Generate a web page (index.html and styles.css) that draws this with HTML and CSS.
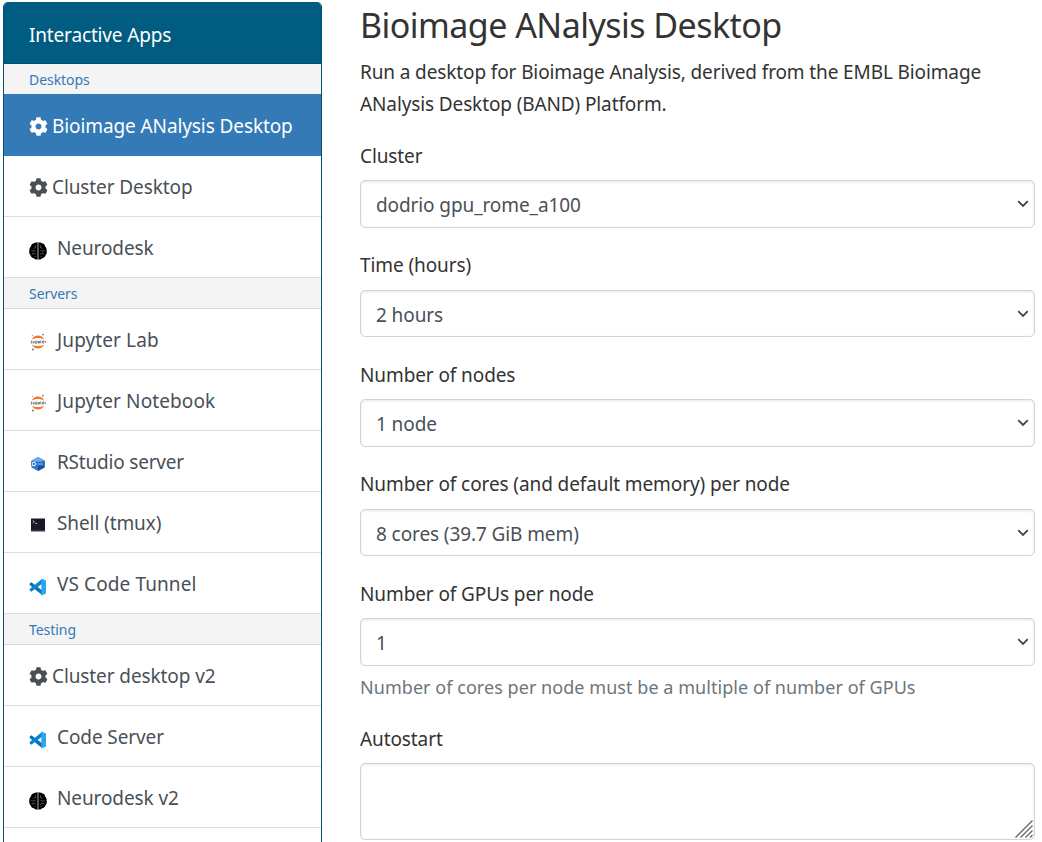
FILE: index.html
```html
<!DOCTYPE html>
<html lang="en">
<head>
<meta charset="utf-8">
<title>Bioimage ANalysis Desktop</title>
<link rel="stylesheet" href="styles.css">
</head>
<body>
<svg class="symbols" aria-hidden="true">
  <symbol id="cog" viewBox="0 0 512 512"><path fill="currentColor" d="M487.4 315.7l-42.600-24.600c4.300-23.200 4.300-47 0-70.200l42.600-24.600c4.900-2.800 7.100-8.600 5.500-14-11.100-35.600-30-67.800-54.700-94.600-3.800-4.100-10-5.100-14.800-2.300L380.800 110c-17.900-15.400-38.500-27.300-60.800-35.100V25.800c0-5.600-3.900-10.500-9.400-11.700-36.700-8.200-74.300-7.800-109.200 0-5.500 1.200-9.400 6.100-9.400 11.700V75c-22.200 7.900-42.800 19.800-60.800 35.100L88.700 85.500c-4.900-2.800-11-1.900-14.800 2.300-24.700 26.700-43.600 58.900-54.700 94.600-1.700 5.400.6 11.200 5.500 14L67.300 221c-4.300 23.200-4.300 47 0 70.200l-42.600 24.600c-4.900 2.800-7.100 8.600-5.500 14 11.100 35.600 30 67.800 54.700 94.600 3.800 4.100 10 5.100 14.800 2.300l42.600-24.600c17.900 15.400 38.500 27.300 60.800 35.100v49.200c0 5.600 3.900 10.500 9.400 11.700 36.700 8.200 74.300 7.800 109.200 0 5.500-1.200 9.400-6.100 9.400-11.700v-49.200c22.200-7.900 42.800-19.800 60.800-35.100l42.600 24.600c4.900 2.800 11 1.900 14.800-2.300 24.700-26.700 43.600-58.900 54.700-94.600 1.500-5.500-.7-11.300-5.600-14.100zM256 336c-44.100 0-80-35.900-80-80s35.900-80 80-80 80 35.900 80 80-35.900 80-80 80z"/></symbol>
  <symbol id="brain" viewBox="0 0 18 18">
    <path d="M8.700 .6C7 .1 5.500.5 4.600 1.500 3 1.700 2 3 1.900 4.500.7 5.500.2 7 .4 8.500-.1 10.500.3 12 1.500 13.200 2 15 3.300 16 4.900 16.300 6 17.500 7.500 17.700 9 17.200c1.500.5 3 .3 4.100-.9 1.600-.3 2.900-1.300 3.400-3.100 1.200-1.200 1.600-2.700 1.100-4.700.2-1.500-.3-3-1.500-4C16 3 15 1.700 13.400 1.500 12.500.5 11 .1 9.300.6z"/>
    <path d="M9 1v16" stroke="#aaa" stroke-width="1"/>
    <path d="M6.500 3.500v2l-2 1M2.500 8.500l2 .7 2-1M3 12l2.200-.8 1.500 1.500M6 15v-1M11.500 3.500v2l2 1M15.500 8.500l-2 .7-2-1M15 12l-2.200-.8-1.500 1.500M12 15v-1" fill="none" stroke="#808080" stroke-width=".7"/>
  </symbol>
  <symbol id="jupyter" viewBox="0 0 16 18">
    <path d="M1.800 6.500C2.900 3.700 5.300 2.400 8 2.400s5.100 1.300 6.200 4.100C12.500 5.400 10.500 4.900 8 4.900s-4.500.5-6.200 1.600zM1.800 11.500c1.100 2.800 3.500 4.100 6.200 4.100s5.100-1.300 6.200-4.100c-1.700 1.100-3.700 1.600-6.200 1.600s-4.500-.5-6.200-1.600z" fill="#f37726"/>
    <path d="M1.500 7.500v2.700h-.8M3 8v2h1.300V8M5.800 11V8h1.300v2H5.800M8.200 8l.7 2 .7-2-.9 3M10.700 7.300V10h.8M12.500 9h1.500V8h-1.400v2h1.500M15.300 10V8" fill="none" stroke="#666" stroke-width=".75"/>
    <circle cx="12.900" cy="1.600" r=".9" fill="#767677"/><circle cx="2.300" cy="2.500" r=".6" fill="#767677"/><circle cx="3" cy="16.400" r="1" fill="#767677"/>
  </symbol>
  <symbol id="rstudio" viewBox="0 0 16 16">
    <path d="M8 1l6.500 3.500v7L8 15l-6.500-3.500v-7z" fill="#2f78cf"/>
    <path d="M8 1l6.500 3.500L8 8 1.500 4.500z" fill="#67aceb"/>
    <path d="M8 8l6.500-3.500v7L8 15z" fill="#194f9e"/>
    <path d="M1 5.800h13.500v4H1z" fill="#2669bd"/>
    <circle cx="3.800" cy="7.900" r="1.700" fill="none" stroke="#e5f2ff" stroke-width="1.100"/>
    <path d="M6.500 8h6.500" stroke="#8fbef0" stroke-width="1"/>
  </symbol>
  <symbol id="terminal" viewBox="0 0 16 14">
    <path d="M1 .5h14v13H1z" fill="#1b1729"/><path d="M.8 13.200h14.400" stroke="#aaa6ae" stroke-width=".8"/>
    <path d="M2.800 2.500l1.500 1.200-1.500 1.200M5.200 5.400h2" fill="none" stroke="#ddd" stroke-width=".8"/>
  </symbol>
  <symbol id="vscode" viewBox="0 0 18 18">
    <path d="M.7 5.500l1.600-1.300L13 12.200v4.800L.7 6.900z" fill="#0872b8"/>
    <path d="M.7 12.500l1.600 1.300L13 5.800V1L.7 11.100z" fill="#0b85cf"/>
    <path d="M12.300.6L17 2.600v12.800l-4.700 2.100V5z" fill="#2aa5ef"/>
  </symbol>
</svg>
<div class="page">
  <nav class="sidebar">
    <div class="sidebar-title">Interactive Apps</div>
    <div class="group first">Desktops</div>
    <a class="app active"><svg class="cog"><use href="#cog"/></svg><span>Bioimage ANalysis Desktop</span></a>
    <a class="app"><svg class="cog"><use href="#cog"/></svg><span>Cluster Desktop</span></a>
    <a class="app"><svg class="pic"><use href="#brain"/></svg><span>Neurodesk</span></a>
    <div class="group">Servers</div>
    <a class="app"><svg class="pic jup"><use href="#jupyter"/></svg><span class="loose">Jupyter Lab</span></a>
    <a class="app"><svg class="pic jup"><use href="#jupyter"/></svg><span class="loose">Jupyter Notebook</span></a>
    <a class="app"><svg class="pic rst"><use href="#rstudio"/></svg><span class="tight">RStudio server</span></a>
    <a class="app"><svg class="pic term"><use href="#terminal"/></svg><span>Shell (tmux)</span></a>
    <a class="app"><svg class="pic"><use href="#vscode"/></svg><span class="loose">VS Code Tunnel</span></a>
    <div class="group">Testing</div>
    <a class="app"><svg class="cog"><use href="#cog"/></svg><span>Cluster desktop v2</span></a>
    <a class="app"><svg class="pic"><use href="#vscode"/></svg><span>Code Server</span></a>
    <a class="app"><svg class="pic"><use href="#brain"/></svg><span>Neurodesk v2</span></a>
  </nav>
  <main class="content">
    <h1>Bioimage ANalysis Desktop</h1>
    <p class="intro">Run a desktop for Bioimage Analysis, derived from the EMBL Bioimage<br>ANalysis Desktop (BAND) Platform.</p>
    <div class="field"><label>Cluster</label><div class="select"><span>dodrio gpu_rome_a100</span><svg class="chev" viewBox="0 0 12 8"><path d="M1.200 1.200L6 6l4.800-4.800"/></svg></div></div>
    <div class="field"><label>Time (hours)</label><div class="select"><span>2 hours</span><svg class="chev" viewBox="0 0 12 8"><path d="M1.200 1.200L6 6l4.800-4.800"/></svg></div></div>
    <div class="field"><label>Number of nodes</label><div class="select"><span>1 node</span><svg class="chev" viewBox="0 0 12 8"><path d="M1.200 1.200L6 6l4.800-4.800"/></svg></div></div>
    <div class="field"><label>Number of cores (and default memory) per node</label><div class="select"><span>8 cores (39.7 GiB mem)</span><svg class="chev" viewBox="0 0 12 8"><path d="M1.200 1.200L6 6l4.800-4.800"/></svg></div></div>
    <div class="field"><label>Number of GPUs per node</label><div class="select"><span>1</span><svg class="chev" viewBox="0 0 12 8"><path d="M1.200 1.200L6 6l4.800-4.800"/></svg></div><small>Number of cores per node must be a multiple of number of GPUs</small></div>
    <div class="field last"><label>Autostart</label><div class="textarea"><svg class="grip" viewBox="0 0 18 18"><path d="M.5 17.500l17-17M5.500 17.500l12-12M10.500 17.500l7-7M15 17.500l2.500-2.500"/></svg></div></div>
  </main>
</div>
</body>
</html>
```
FILE: styles.css
```css
* { box-sizing: border-box; }
body { margin: 0; background: #fff; color: #333; font: 19px/30px "Noto Sans", "Open Sans", sans-serif; letter-spacing: -.1px; overflow: hidden; }
.symbols { display: none; }
.page { display: flex; gap: 38px; height: 842px; padding: 2px 7px 0 3px; overflow: hidden; }
.sidebar { flex: none; width: 319px; height: 900px; border: 1px solid #00506f; border-top: 0; border-radius: 5px 5px 0 0; overflow: hidden; }
.sidebar-title { height: 62px; margin: 0 -1px; padding: 18px 26px 0; background: #005c80; border-bottom: 1px solid #00506f; color: #fff; line-height: 30px; letter-spacing: -.16px; }
.group { height: 31px; padding: 0 25px; background: #f4f4f4; border-bottom: 1px solid #d8d8d8; color: #337ab7; font-size: 14px; line-height: 32px; letter-spacing: -.05px; }
.group.first { height: 30px; border-bottom: 0; }
.app { display: flex; align-items: center; height: 61px; padding: 2px 25px 0; border-bottom: 1px solid #ddd; color: #495057; white-space: nowrap; }
.app.active { height: 62px; padding-top: 3px; background: #337ab7; border-color: #337ab7; color: #fff; }
.loose { letter-spacing: .1px; }
.tight { letter-spacing: -.2px; }
.cog { width: 19px; height: 19px; margin-right: 4px; }
.pic { width: 18px; height: 18px; margin: 5px 10px 0 0; }
.pic.jup { width: 16px; margin: 4px 11px 0 1px; }
.pic.rst { width: 16px; height: 16px; margin: 4px 11px 0 1px; }
.pic.term { width: 16px; height: 14px; margin: 4px 11px 0 1px; }
.content { flex: 1; white-space: nowrap; }
h1 { margin: 3px 0 11px; font-size: 34px; line-height: 40px; font-weight: 400; letter-spacing: -.54px; }
.intro { margin: 0 0 20px; line-height: 32px; letter-spacing: -.12px; }
.field { margin-bottom: 22px; }
label { display: block; margin-bottom: 9.5px; padding-top: .5px; }
.last label { margin-bottom: 8.5px; }
.select { display: flex; justify-content: space-between; align-items: center; height: 47.5px; padding: 3px 5px 0 15px; border: 1px solid #ced4da; border-radius: 5px; box-shadow: inset 0 1px 3px rgba(0,0,0,.1); color: #495057; }
.chev { width: 12px; height: 8px; margin-bottom: 2px; fill: none; stroke: #40464c; stroke-width: 1.800; }
small { display: block; margin-top: 6px; font-size: 18px; letter-spacing: .05px; color: #6c757d; }
.textarea { display: flex; justify-content: flex-end; align-items: flex-end; height: 77px; padding: 1px; border: 1px solid #ced4da; border-radius: 5px; box-shadow: inset 0 1px 3px rgba(0,0,0,.1); }
.grip { width: 18px; height: 18px; fill: none; stroke: #666; stroke-width: 1.300; }
```
